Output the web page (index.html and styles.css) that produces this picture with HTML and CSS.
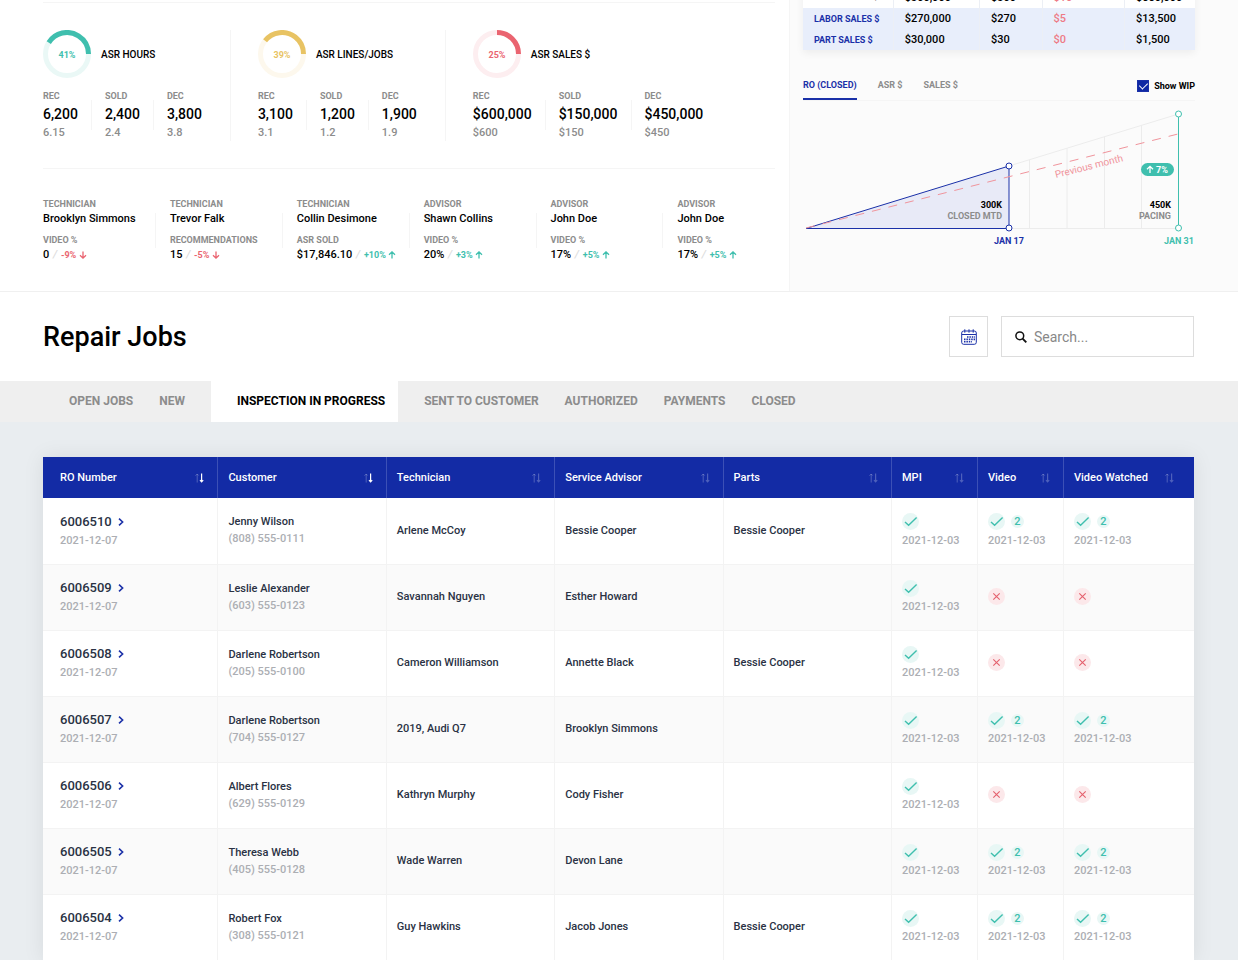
FILE: index.html
```html
<!DOCTYPE html>
<html lang="en">
<head>
    <meta charset="UTF-8">
    <meta name="viewport" content="width=device-width, initial-scale=1.0">
    <title>Repair Jobs</title>
    <link rel="stylesheet" href="styles.css">
</head>
<body>
    <!-- shared icons -->
    <svg class="sprite" aria-hidden="true">
        <symbol id="arrow-up" viewBox="0 0 8 8">
            <path d="M4 7.6V1M1 3.8L4 .9l3 2.9" fill="none" stroke="currentColor" stroke-width="1.3"/>
        </symbol>
        <symbol id="arrow-down" viewBox="0 0 8 8">
            <path d="M4 .4V7M1 4.2l3 2.9 3-2.9" fill="none" stroke="currentColor" stroke-width="1.3"/>
        </symbol>
        <symbol id="chevron" viewBox="0 0 6 8">
            <path d="M1 .7L4.6 4 1 7.3" fill="none" stroke="currentColor" stroke-width="1.6"/>
        </symbol>
        <symbol id="check" viewBox="0 0 17 17">
            <circle cx="8.5" cy="8.5" r="8.5" fill="#e8f7f5"/>
            <path d="M3 9l3.6 3.3L14.6 4.6" fill="none" stroke="#3fbfae" stroke-width="1.4"/>
        </symbol>
        <symbol id="cross" viewBox="0 0 17 17">
            <circle cx="8.5" cy="8.5" r="8.5" fill="#fce8ea"/>
            <path d="M5.3 5.3l6.4 6.4M11.7 5.3l-6.4 6.4" fill="none" stroke="#e4606d" stroke-width="1.1"/>
        </symbol>
        <symbol id="sort" viewBox="0 0 9 10">
            <path d="M2.2 9.5V1.2M.5 2.7L2.2 1l1.4 1.5" fill="none" stroke="#fff" stroke-width="1" opacity=".25"/>
            <path d="M6.6 .5v8M5 7.1l1.6 1.8 1.6-1.8" fill="none" stroke="currentColor" stroke-width="1.2"/>
        </symbol>
    </svg>

    <section class="overview">
        <div class="metrics">
            <div class="asr">
                <div class="asr-group">
                    <div class="asr-head">
                        <svg class="donut" viewBox="0 0 48 48">
                            <circle cx="24" cy="24" r="21.5" fill="none" stroke="#eaf8f6" stroke-width="5"/>
                            <circle cx="24" cy="24" r="21.5" fill="none" stroke="#3fbfae" stroke-width="5" pathLength="100" stroke-dasharray="41 59" transform="rotate(-148 24 24)"/>
                            <text x="24" y="28" fill="#3fbfae">41%</text>
                        </svg>
                        <h3>ASR HOURS</h3>
                    </div>
                    <div class="stats">
                        <div><span class="label">REC</span><b>6,200</b><small>6.15</small></div>
                        <i class="sep"></i>
                        <div><span class="label">SOLD</span><b>2,400</b><small>2.4</small></div>
                        <i class="sep"></i>
                        <div><span class="label">DEC</span><b>3,800</b><small>3.8</small></div>
                    </div>
                </div>
                <div class="asr-group">
                    <div class="asr-head">
                        <svg class="donut" viewBox="0 0 48 48">
                            <circle cx="24" cy="24" r="21.5" fill="none" stroke="#fdf8ed" stroke-width="5"/>
                            <circle cx="24" cy="24" r="21.5" fill="none" stroke="#e8c363" stroke-width="5" pathLength="100" stroke-dasharray="39.5 60.5" transform="rotate(-142 24 24)"/>
                            <text x="24" y="28" fill="#e8c363">39%</text>
                        </svg>
                        <h3>ASR LINES/JOBS</h3>
                    </div>
                    <div class="stats">
                        <div><span class="label">REC</span><b>3,100</b><small>3.1</small></div>
                        <i class="sep"></i>
                        <div><span class="label">SOLD</span><b>1,200</b><small>1.2</small></div>
                        <i class="sep"></i>
                        <div><span class="label">DEC</span><b>1,900</b><small>1.9</small></div>
                    </div>
                </div>
                <div class="asr-group">
                    <div class="asr-head">
                        <svg class="donut" viewBox="0 0 48 48">
                            <circle cx="24" cy="24" r="21.5" fill="none" stroke="#fdeef0" stroke-width="5"/>
                            <circle cx="24" cy="24" r="21.5" fill="none" stroke="#ea6470" stroke-width="5" pathLength="100" stroke-dasharray="25 75" transform="rotate(-90 24 24)"/>
                            <text x="24" y="28" fill="#ea6470">25%</text>
                        </svg>
                        <h3>ASR SALES $</h3>
                    </div>
                    <div class="stats">
                        <div><span class="label">REC</span><b>$600,000</b><small>$600</small></div>
                        <i class="sep"></i>
                        <div><span class="label">SOLD</span><b>$150,000</b><small>$150</small></div>
                        <i class="sep"></i>
                        <div><span class="label">DEC</span><b>$450,000</b><small>$450</small></div>
                    </div>
                </div>
            </div>

            <div class="people">
                <div class="person">
                    <div>
                        <span class="label">TECHNICIAN</span>
                        <strong>Brooklyn Simmons</strong>
                        <span class="label">VIDEO %</span>
                        <p>0 <i>/</i> <em class="down">-9% <svg><use href="#arrow-down"/></svg></em></p>
                    </div>
                </div>
                <div class="person">
                    <div>
                        <span class="label">TECHNICIAN</span>
                        <strong>Trevor Falk</strong>
                        <span class="label">RECOMMENDATIONS</span>
                        <p>15 <i>/</i> <em class="down">-5% <svg><use href="#arrow-down"/></svg></em></p>
                    </div>
                </div>
                <div class="person">
                    <div>
                        <span class="label">TECHNICIAN</span>
                        <strong>Collin Desimone</strong>
                        <span class="label">ASR SOLD</span>
                        <p>$17,846.10 <i>/</i> <em class="up">+10% <svg><use href="#arrow-up"/></svg></em></p>
                    </div>
                </div>
                <div class="person">
                    <div>
                        <span class="label">ADVISOR</span>
                        <strong>Shawn Collins</strong>
                        <span class="label">VIDEO %</span>
                        <p>20% <i>/</i> <em class="up">+3% <svg><use href="#arrow-up"/></svg></em></p>
                    </div>
                </div>
                <div class="person">
                    <div>
                        <span class="label">ADVISOR</span>
                        <strong>John Doe</strong>
                        <span class="label">VIDEO %</span>
                        <p>17% <i>/</i> <em class="up">+5% <svg><use href="#arrow-up"/></svg></em></p>
                    </div>
                </div>
                <div class="person">
                    <div>
                        <span class="label">ADVISOR</span>
                        <strong>John Doe</strong>
                        <span class="label">VIDEO %</span>
                        <p>17% <i>/</i> <em class="up">+5% <svg><use href="#arrow-up"/></svg></em></p>
                    </div>
                </div>
            </div>
        </div>

        <aside class="side">
            <table class="sales">
                <tr><th scope="row">TOTAL SALES $</th><td>$300,000</td><td>$300</td><td class="neg">$10</td><td>$550,000</td></tr>
                <tr class="tint"><th scope="row">LABOR SALES $</th><td>$270,000</td><td>$270</td><td class="neg">$5</td><td>$13,500</td></tr>
                <tr class="tint"><th scope="row">PART SALES $</th><td>$30,000</td><td>$30</td><td class="neg">$0</td><td>$1,500</td></tr>
            </table>

            <div class="chart-bar">
                <div class="chart-tabs">
                    <button type="button" class="active">RO (CLOSED)</button>
                    <button type="button">ASR $</button>
                    <button type="button">SALES $</button>
                </div>
                <label class="wip" for="wip"><input type="checkbox" id="wip" checked> Show WIP</label>
            </div>

            <svg class="chart" viewBox="0 0 392 145">
                <g stroke="#ececec" fill="none">
                    <path d="M206 61L375.5 9M206 123.5H375.5"/>
                    <path d="M226.5 55V123M264 43.5V123M301.5 32V123M338.5 20.5V123"/>
                </g>
                <path d="M3 123.5L206 61V123.5Z" fill="#e8eaf7" stroke="#1a30a8"/>
                <path d="M3 123L375 29" stroke="#f0949c" stroke-dasharray="9 8" fill="none"/>
                <path d="M375.5 9V123" stroke="#3fbfae"/>
                <g fill="#fff">
                    <circle cx="206" cy="61" r="3" stroke="#1a30a8"/>
                    <circle cx="206" cy="123" r="3" stroke="#1a30a8"/>
                    <circle cx="375.5" cy="9" r="3" stroke="#3fbfae"/>
                    <circle cx="375.5" cy="123" r="3" stroke="#3fbfae"/>
                </g>
                <text class="prev" transform="translate(253 73) rotate(-14)">Previous month</text>
                <rect x="338" y="58" width="33" height="13" rx="6.5" fill="#3fbfae"/>
                <path d="M347 68v-6.500M344 64.300l3-2.900 3 2.900" fill="none" stroke="#fff" stroke-width="1.3"/>
                <text class="mid white" x="359" y="68">7%</text>
                <text class="end black" x="199" y="103">300K</text>
                <text class="end grey" x="199" y="114">CLOSED MTD</text>
                <text class="end black" x="368" y="103">450K</text>
                <text class="end grey" x="368" y="114">PACING</text>
                <text class="mid blue" x="206" y="139">JAN 17</text>
                <text class="mid teal" x="376" y="139">JAN 31</text>
            </svg>
        </aside>
    </section>

    <header class="jobs-header">
        <h1>Repair Jobs</h1>
        <div class="tools">
            <button type="button" class="calendar" aria-label="Pick a date">
                <svg viewBox="0 0 16 16" width="16" height="16" fill="none" stroke="#1a30a8">
                    <rect x=".7" y="2" width="14.6" height="13.3" rx="2"/>
                    <path d="M1 5.5h14M3.8 .3v3.4M8 .3v3.4M12.2 .3v3.4"/>
                    <path d="M6 8h8M3 10.4h11M3 12.8h8" stroke-width="1.6" stroke-dasharray="1.5 .9"/>
                </svg>
            </button>
            <label class="search">
                <svg viewBox="0 0 12 12" width="12" height="12" fill="none" stroke="#111">
                    <circle cx="4.8" cy="4.8" r="3.9" stroke-width="1.5"/>
                    <path d="M7.6 7.6L11.3 11.3" stroke-width="1.9"/>
                </svg>
                <input type="search" placeholder="Search..." aria-label="Search">
            </label>
        </div>
    </header>

    <nav class="job-tabs">
        <a href="#">OPEN JOBS</a>
        <a href="#">NEW</a>
        <a href="#" class="active">INSPECTION IN PROGRESS</a>
        <a href="#">SENT TO CUSTOMER</a>
        <a href="#">AUTHORIZED</a>
        <a href="#">PAYMENTS</a>
        <a href="#">CLOSED</a>
    </nav>

    <main class="jobs">
        <table class="jobs-table">
            <colgroup>
                <col class="col-ro">
                <col class="col-name">
                <col class="col-name">
                <col class="col-name">
                <col class="col-name">
                <col class="col-check">
                <col class="col-check">
                <col>
            </colgroup>
            <thead>
                <tr>
                    <th><button type="button" class="sorted">RO Number <svg><use href="#sort"/></svg></button></th>
                    <th><button type="button" class="sorted">Customer <svg><use href="#sort"/></svg></button></th>
                    <th><button type="button">Technician <svg><use href="#sort"/></svg></button></th>
                    <th><button type="button">Service Advisor <svg><use href="#sort"/></svg></button></th>
                    <th><button type="button">Parts <svg><use href="#sort"/></svg></button></th>
                    <th><button type="button">MPI <svg><use href="#sort"/></svg></button></th>
                    <th><button type="button">Video <svg><use href="#sort"/></svg></button></th>
                    <th><button type="button">Video Watched <svg><use href="#sort"/></svg></button></th>
                </tr>
            </thead>
            <tbody>
                <tr>
                    <td><a href="#" class="ro">6006510 <svg><use href="#chevron"/></svg></a><time>2021-12-07</time></td>
                    <td>Jenny Wilson<span class="phone">(808) 555-0111</span></td>
                    <td>Arlene McCoy</td>
                    <td>Bessie Cooper</td>
                    <td>Bessie Cooper</td>
                    <td><div class="status"><svg><use href="#check"/></svg></div><time>2021-12-03</time></td>
                    <td><div class="status"><svg><use href="#check"/></svg><span class="count">2</span></div><time>2021-12-03</time></td>
                    <td><div class="status"><svg><use href="#check"/></svg><span class="count">2</span></div><time>2021-12-03</time></td>
                </tr>
                <tr>
                    <td><a href="#" class="ro">6006509 <svg><use href="#chevron"/></svg></a><time>2021-12-07</time></td>
                    <td>Leslie Alexander<span class="phone">(603) 555-0123</span></td>
                    <td>Savannah Nguyen</td>
                    <td>Esther Howard</td>
                    <td></td>
                    <td><div class="status"><svg><use href="#check"/></svg></div><time>2021-12-03</time></td>
                    <td><div class="status"><svg><use href="#cross"/></svg></div></td>
                    <td><div class="status"><svg><use href="#cross"/></svg></div></td>
                </tr>
                <tr>
                    <td><a href="#" class="ro">6006508 <svg><use href="#chevron"/></svg></a><time>2021-12-07</time></td>
                    <td>Darlene Robertson<span class="phone">(205) 555-0100</span></td>
                    <td>Cameron Williamson</td>
                    <td>Annette Black</td>
                    <td>Bessie Cooper</td>
                    <td><div class="status"><svg><use href="#check"/></svg></div><time>2021-12-03</time></td>
                    <td><div class="status"><svg><use href="#cross"/></svg></div></td>
                    <td><div class="status"><svg><use href="#cross"/></svg></div></td>
                </tr>
                <tr>
                    <td><a href="#" class="ro">6006507 <svg><use href="#chevron"/></svg></a><time>2021-12-07</time></td>
                    <td>Darlene Robertson<span class="phone">(704) 555-0127</span></td>
                    <td>2019, Audi Q7</td>
                    <td>Brooklyn Simmons</td>
                    <td></td>
                    <td><div class="status"><svg><use href="#check"/></svg></div><time>2021-12-03</time></td>
                    <td><div class="status"><svg><use href="#check"/></svg><span class="count">2</span></div><time>2021-12-03</time></td>
                    <td><div class="status"><svg><use href="#check"/></svg><span class="count">2</span></div><time>2021-12-03</time></td>
                </tr>
                <tr>
                    <td><a href="#" class="ro">6006506 <svg><use href="#chevron"/></svg></a><time>2021-12-07</time></td>
                    <td>Albert Flores<span class="phone">(629) 555-0129</span></td>
                    <td>Kathryn Murphy</td>
                    <td>Cody Fisher</td>
                    <td></td>
                    <td><div class="status"><svg><use href="#check"/></svg></div><time>2021-12-03</time></td>
                    <td><div class="status"><svg><use href="#cross"/></svg></div></td>
                    <td><div class="status"><svg><use href="#cross"/></svg></div></td>
                </tr>
                <tr>
                    <td><a href="#" class="ro">6006505 <svg><use href="#chevron"/></svg></a><time>2021-12-07</time></td>
                    <td>Theresa Webb<span class="phone">(405) 555-0128</span></td>
                    <td>Wade Warren</td>
                    <td>Devon Lane</td>
                    <td></td>
                    <td><div class="status"><svg><use href="#check"/></svg></div><time>2021-12-03</time></td>
                    <td><div class="status"><svg><use href="#check"/></svg><span class="count">2</span></div><time>2021-12-03</time></td>
                    <td><div class="status"><svg><use href="#check"/></svg><span class="count">2</span></div><time>2021-12-03</time></td>
                </tr>
                <tr>
                    <td><a href="#" class="ro">6006504 <svg><use href="#chevron"/></svg></a><time>2021-12-07</time></td>
                    <td>Robert Fox<span class="phone">(308) 555-0121</span></td>
                    <td>Guy Hawkins</td>
                    <td>Jacob Jones</td>
                    <td>Bessie Cooper</td>
                    <td><div class="status"><svg><use href="#check"/></svg></div><time>2021-12-03</time></td>
                    <td><div class="status"><svg><use href="#check"/></svg><span class="count">2</span></div><time>2021-12-03</time></td>
                    <td><div class="status"><svg><use href="#check"/></svg><span class="count">2</span></div><time>2021-12-03</time></td>
                </tr>
            </tbody>
        </table>
    </main>
</body>
</html>
```
FILE: styles.css
```css
* {
    box-sizing: border-box;
}
body {
    margin: 0;
    font-family: Roboto, sans-serif;
    font-size: 11px;
    font-weight: 500;
    color: #000;
    background: #fff;
}
button, input {
    font: inherit;
    color: inherit;
}
button {
    padding: 0;
    border: none;
    background: none;
    cursor: pointer;
}
a {
    color: inherit;
    text-decoration: none;
}
h1, h3, p {
    margin: 0;
    font-weight: 500;
}
.sprite {
    display: none;
}
.label {
    display: block;
    font-size: 9px;
    font-weight: 700;
    line-height: 14px;
    color: #8c8c8c;
}

/* overview */
.overview {
    display: grid;
    grid-template-columns: 789fr 449fr;
    border-bottom: 1px solid #f0f0f0;
}
.metrics {
    padding: 2px 14px 0 43px;
}
.asr {
    display: flex;
    padding: 27px 0;
    border-top: 1px solid #f5f5f5;
    border-bottom: 1px solid #f5f5f5;
}
.asr-group + .asr-group {
    margin-left: 28px;
    padding-left: 27px;
    border-left: 1px solid #f5f5f5;
}
.asr-head {
    display: flex;
    align-items: center;
    gap: 10px;
    margin-bottom: 11px;
}
.asr-head h3 {
    font-size: 10px;
}
.donut {
    width: 48px;
    height: 48px;
}
.donut text {
    font-size: 9px;
    font-weight: 700;
    text-anchor: middle;
}
.stats {
    display: flex;
    gap: 13px;
}
.stats b {
    display: block;
    font-size: 14px;
    font-weight: 500;
    line-height: 22px;
}
.stats small {
    display: block;
    font-size: 11px;
    line-height: 16px;
    color: #8c8c8c;
}
.sep {
    width: 1px;
    height: 30px;
    align-self: center;
    background: #f5f5f5;
}
.people {
    display: grid;
    grid-template-columns: repeat(5, 13fr) 10fr;
    padding: 28px 0;
    white-space: nowrap;
}
.person {
    display: flex;
    align-items: center;
    justify-content: space-between;
}
.person:not(:last-child)::after {
    content: "";
    width: 1px;
    height: 35px;
    margin-right: 14px;
    background: #f5f5f5;
}
.person > div {
    width: 0;
}
.person strong {
    display: block;
    margin-bottom: 6px;
    font-weight: 500;
    line-height: 16px;
}
.person p {
    line-height: 16px;
}
.person i {
    margin: 0 1px;
    color: #ddd;
}
.person em {
    font-size: 9px;
    font-weight: 700;
    font-style: normal;
}
.person svg {
    width: 8px;
    height: 8px;
    vertical-align: -1px;
}
.up {
    color: #3fbfae;
}
.down {
    color: #ea6470;
}

/* side panel */
.side {
    padding: 0 43px 0 13px;
    background: #fbfbfb;
    border-left: 1px solid #f5f5f5;
}
.sales {
    width: 100%;
    margin-top: -14px;
    table-layout: fixed;
    border-collapse: collapse;
    background: #fff;
    box-shadow: 0 3px 8px rgba(0, 0, 0, 0.06);
}
.sales th, .sales td {
    height: 22px;
    padding: 0 0 0 11px;
    text-align: left;
    font-weight: 500;
}
.sales th {
    width: 23%;
    font-size: 9px;
    font-weight: 700;
    color: #8c8c8c;
}
.sales td {
    border-left: 1px solid #eceff5;
}
.sales td:nth-child(2) {
    width: 22%;
}
.sales td:nth-child(3) {
    width: 16%;
}
.sales td:nth-child(4) {
    width: 21%;
}
.sales .neg {
    color: #ee7a86;
}
.tint {
    background: #e8eefb;
}
.sales .tint th, .sales .tint td {
    height: 21px;
}
.sales .tint th {
    color: #1a30a8;
}
.chart-bar {
    display: flex;
    justify-content: space-between;
    margin-top: 21px;
    border-bottom: 1px solid #f5f5f5;
}
.chart-tabs {
    display: flex;
    gap: 21px;
    font-size: 9px;
    font-weight: 700;
    color: #8c8c8c;
}
.chart-tabs button {
    height: 29px;
    border-bottom: 2px solid transparent;
}
.chart-tabs .active {
    color: #1a30a8;
    border-color: #1a30a8;
}
.wip {
    display: flex;
    align-items: center;
    gap: 5px;
    font-size: 9px;
    font-weight: 700;
}
.wip input {
    appearance: none;
    display: flex;
    justify-content: center;
    width: 12px;
    height: 12px;
    margin: 0;
    border: 1px solid #1a30a8;
}
.wip input:checked {
    background: #0f28a4;
}
.wip input:checked::after {
    content: "";
    width: 4px;
    height: 7px;
    border: solid #fff;
    border-width: 0 1px 1px 0;
    transform: rotate(45deg);
}
.chart {
    display: block;
    width: 100%;
    margin-top: 4px;
    font-size: 9px;
    font-weight: 700;
}
.chart .prev {
    font-size: 10px;
    font-weight: 400;
    fill: #f0949c;
}
.chart .mid {
    text-anchor: middle;
}
.chart .end {
    text-anchor: end;
}
.chart .grey {
    fill: #8c8c8c;
}
.chart .blue {
    fill: #1a30a8;
}
.chart .teal {
    fill: #3fbfae;
}
.chart .white {
    fill: #fff;
}

/* repair jobs */
.jobs-header {
    display: flex;
    align-items: center;
    justify-content: space-between;
    padding: 24px 44px 24px 43px;
}
.jobs-header h1 {
    font-size: 27px;
}
.tools {
    display: flex;
    gap: 13px;
}
.calendar {
    display: flex;
    align-items: center;
    justify-content: center;
    width: 39px;
    border: 1px solid #ddd;
}
.search {
    display: flex;
    align-items: center;
    gap: 7px;
    width: 193px;
    height: 41px;
    padding: 0 13px;
    border: 1px solid #ddd;
}
.search svg {
    flex: none;
}
.search input {
    width: 100%;
    padding: 0;
    border: none;
    outline: none;
    background: none;
    font-size: 14px;
    font-weight: 400;
}
.search input::placeholder {
    color: #888;
}
.job-tabs {
    display: flex;
    padding-left: 43px;
    background: #efefef;
    font-size: 12px;
    font-weight: 700;
    line-height: 41px;
    color: #8c8c8c;
}
.job-tabs a {
    padding-left: 26px;
}
.job-tabs .active {
    margin-left: 26px;
    padding-right: 13px;
    color: #000;
    background: #fff;
}
.jobs {
    padding: 35px 44px 0 43px;
    background: #e9edf0;
}
.jobs-table {
    width: 100%;
    table-layout: fixed;
    border-collapse: collapse;
    background: #fff;
    color: #2a3244;
    box-shadow: 0 0 20px rgba(0, 0, 0, 0.08);
}
.col-ro {
    width: 15.2%;
}
.col-name {
    width: 14.63%;
}
.col-check {
    width: 7.47%;
}
.jobs-table th {
    height: 41px;
    padding: 0 13px 0 10px;
    background: #132ba5;
    color: #fff;
    border-left: 1px solid #3c50b6;
}
.jobs-table th button {
    display: flex;
    align-items: center;
    justify-content: space-between;
    width: 100%;
    font-weight: 500;
}
.jobs-table th:last-child {
    padding-right: 20px;
}
.jobs-table th svg {
    width: 9px;
    height: 10px;
    color: rgba(255, 255, 255, 0.25);
}
.jobs-table .sorted svg {
    color: #fff;
}
.jobs-table td {
    height: 66px;
    padding: 0 0 1px 10px;
    line-height: 17px;
    border-left: 1px solid #f3f3f3;
    border-bottom: 1px solid #f3f3f3;
}
.jobs-table th:first-child, .jobs-table td:first-child {
    padding-left: 17px;
    border-left: none;
}
.jobs-table tbody tr:nth-child(even) {
    background: #fafafa;
}
.ro {
    display: flex;
    align-items: center;
    gap: 6px;
    font-size: 13px;
    line-height: 20px;
}
.ro svg {
    width: 6px;
    height: 8px;
    color: #1a30a8;
}
.jobs-table time, .phone {
    display: block;
    color: #acaeb3;
}
.status {
    display: flex;
    align-items: center;
    gap: 6px;
    height: 20px;
}
.status svg {
    width: 17px;
    height: 17px;
}
.count {
    width: 13px;
    border-radius: 50%;
    background: #e8f7f5;
    color: #3fbfae;
    line-height: 13px;
    text-align: center;
}
```
